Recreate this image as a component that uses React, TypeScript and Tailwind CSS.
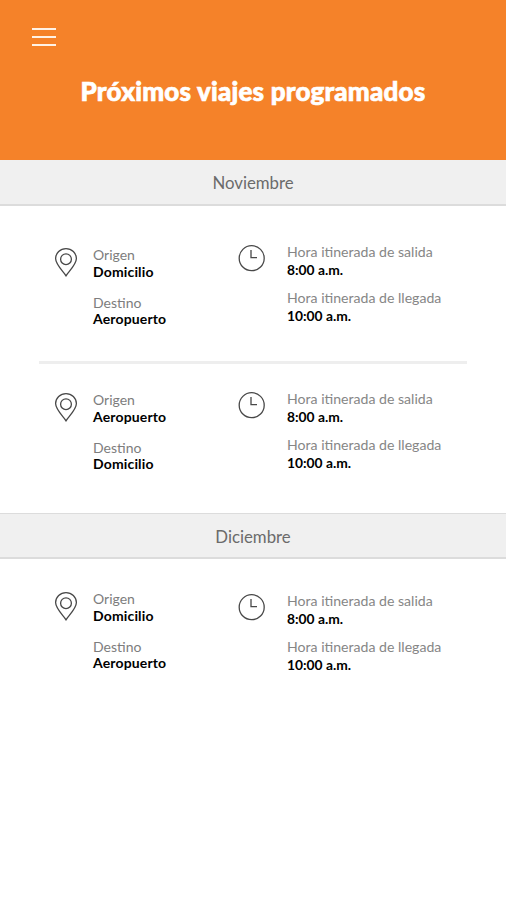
type Trip = {
  from: string;
  to: string;
  placePad: string;
  timePad: string;
};

function PinIcon() {
  return (
    <svg width="24" height="30" viewBox="0 0 24 30" fill="none" stroke="#484848" strokeWidth="1.3" className="mt-[1px] shrink-0">
      <path d="M12 28.8C9.5 24.8 1.6 17.6 1.6 11.6A10.4 10 0 0 1 22.4 11.6C22.4 17.6 14.5 24.8 12 28.8Z" />
      <circle cx="12" cy="12.2" r="5.4" />
    </svg>
  );
}

function ClockIcon() {
  return (
    <svg width="28" height="28" viewBox="0 0 28 28" fill="none" stroke="#484848" strokeWidth="1.3" className="mt-[1px] shrink-0">
      <circle cx="13.7" cy="14.2" r="12.5" />
      <path d="M13 6V13.7H19" />
    </svg>
  );
}

function MonthBar({ name, className }: { name: string; className: string }) {
  return (
    <h2 className={`flex items-center justify-center border-[#dcdcdc] bg-[#f0f0f0] text-[16.8px] text-[#6b6b6b] ${className}`}>
      {name}
    </h2>
  );
}

function TripRow({ trip, className }: { trip: Trip; className: string }) {
  return (
    <article className={`flex text-[14px] ${className}`}>
      <div className={`flex w-[183px] pl-[54px] ${trip.placePad}`}>
        <PinIcon />
        <dl className="ml-[15px] whitespace-nowrap leading-[17px]">
          <dt className="text-[#7d7d7d]">Origen</dt>
          <dd className="font-bold tracking-[0.15px] text-black">{trip.from}</dd>
          <dt className="mt-[14px] text-[#7d7d7d]">Destino</dt>
          <dd className="-mt-px font-bold tracking-[0.15px] text-black">{trip.to}</dd>
        </dl>
      </div>
      <div className={`flex pl-[55px] ${trip.timePad}`}>
        <ClockIcon />
        <dl className="ml-[21px] whitespace-nowrap leading-[18px]">
          <dt className="text-[14.1px] text-[#868686]">Hora itinerada de salida</dt>
          <dd className="text-[13.8px] font-bold text-black">8:00 a.m.</dd>
          <dt className="mt-[10px] text-[14.1px] text-[#868686]">Hora itinerada de llegada</dt>
          <dd className="text-[13.8px] font-bold text-black">10:00 a.m.</dd>
        </dl>
      </div>
    </article>
  );
}

export default function App() {
  return (
    <main className="flex h-[900px] w-[506px] flex-col bg-white font-['Lato',sans-serif]">
      <header className="flex h-[160px] shrink-0 flex-col bg-[#f58229]">
        <button aria-label="Menú" className="ml-8 mt-7 flex h-[18px] w-6 flex-col justify-between">
          <span className="h-[2px] w-full bg-[#fff2e6]" />
          <span className="h-[2px] w-full bg-[#fff2e6]" />
          <span className="h-[2px] w-full bg-[#fff2e6]" />
        </button>
        <h1 className="mt-[29px] whitespace-nowrap text-center text-[26px] font-black leading-8 tracking-[0.2px] text-white [-webkit-text-stroke:0.7px_white]">
          Próximos viajes programados
        </h1>
      </header>
      <MonthBar name="Noviembre" className="h-[46px] border-b-2 pt-px" />
      <TripRow className="h-[155px]" trip={{ from: "Domicilio", to: "Aeropuerto", placePad: "pt-[40px]", timePad: "pt-[37px]" }} />
      <hr className="mx-[39px] h-[3px] border-0 bg-[#eeeeee]" />
      <TripRow className="h-[149px]" trip={{ from: "Aeropuerto", to: "Domicilio", placePad: "pt-[27px]", timePad: "pt-[26px]" }} />
      <MonthBar name="Diciembre" className="h-[46px] border-b-2 border-t pt-[3px]" />
      <TripRow className="h-[140px]" trip={{ from: "Domicilio", to: "Aeropuerto", placePad: "pt-[31px]", timePad: "pt-[33px]" }} />
    </main>
  );
}
